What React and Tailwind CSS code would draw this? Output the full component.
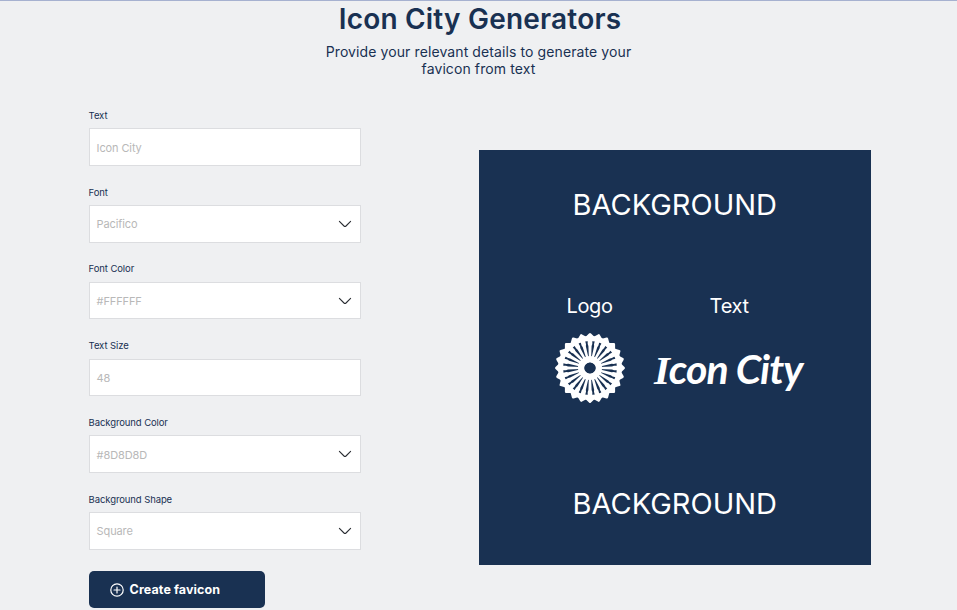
import React from "react";

const fields = [
  { label: "Text", value: "Icon City" },
  { label: "Font", value: "Pacifico", select: true },
  { label: "Font Color", value: "#FFFFFF", select: true },
  { label: "Text Size", value: "48" },
  { label: "Background Color", value: "#8D8D8D", select: true },
  { label: "Background Shape", value: "Square", select: true },
];

const spokes = Array.from({ length: 24 }, (_, i) => i * 15);

function Chevron() {
  return (
    <svg width="14" height="8" viewBox="0 0 14 8" fill="none" stroke="#292d32" strokeWidth="1.1" strokeLinecap="round" strokeLinejoin="round">
      <path d="M1.4 1.4 L6 6 Q7 6.8 8 6 L12.6 1.4" />
    </svg>
  );
}

function Field({ label, value, select }) {
  return (
    <div className="flex h-[76.75px] flex-col">
      <label className="h-[18.5px] text-[9.5px] leading-[12px] tracking-[-0.1px] text-[#193152]">{label}</label>
      <div className="flex h-[37.5px] w-[272px] items-center justify-between border border-[#dcdde0] bg-white pr-[8px] pl-[7px]">
        <span className="pt-px text-[11px] leading-[14px] tracking-[-0.12px] text-[#b8b8b8]">{value}</span>
        {select && <Chevron />}
      </div>
    </div>
  );
}

function Rosette() {
  return (
    <svg width="72" height="72" viewBox="-36 -36 72 72" fill="#fff">
      <circle r="29.4" fill="none" stroke="#fff" strokeWidth="5" />
      <circle r="8.7" fill="none" stroke="#fff" strokeWidth="6.6" />
      {spokes.map((a) => (
        <path key={a} transform={`rotate(${a})`} d="M-1.1 -9 L-1.6 -22 L-2.3 -24 L-2.3 -27 L-4.1 -29 L-4.1 -31.4 L-1 -34.5 Q0 -35.6 1 -34.5 L4.1 -31.4 L4.1 -29 L2.3 -27 L2.3 -24 L1.6 -22 L1.1 -9 Z" />
      ))}
      <ellipse rx="5.7" ry="5.2" fill="#193152" />
    </svg>
  );
}

export default function App() {
  return (
    <main className="h-[610px] w-[957px] overflow-hidden border-t border-[#a6b1d0] bg-[#eff0f2] font-['Inter',sans-serif] text-[#193152]">
      <header className="flex h-[108px] flex-col items-center pl-[3px] text-center">
        <h1 className="h-[42px] pt-[1px] text-[28px] leading-[35px] font-semibold tracking-[0.2px] whitespace-nowrap">Icon City Generators</h1>
        <p className="mr-[3px] text-[14px] leading-[17px] tracking-[0.1px] whitespace-nowrap">
          Provide your relevant details to generate your
          <br />
          favicon from text
        </p>
      </header>
      <div className="flex pl-[88.6px]">
        <form className="flex w-[390px] flex-col pt-[0.9px]">
          {fields.map((f) => (
            <Field key={f.label} {...f} />
          ))}
          <button type="button" className="mt-[0.5px] flex h-[37.5px] w-[176.4px] items-center gap-[6px] rounded-[5px] bg-[#193152] pl-[21px] text-[12.5px] font-bold tracking-[0.1px] text-white">
            <svg width="14" height="14" viewBox="0 0 14 14" fill="none" stroke="#fff" strokeWidth="1.2" strokeLinecap="round">
              <circle cx="7" cy="7" r="6.2" />
              <path d="M4 7h6M7 4v6" />
            </svg>
            <span className="pt-px whitespace-nowrap">Create favicon</span>
          </button>
        </form>
        <section className="mt-[41px] flex h-[415px] w-[392.4px] flex-col items-center bg-[#193152] text-white">
          <h2 className="mt-[36px] text-[29px] leading-[37px] whitespace-nowrap">BACKGROUND</h2>
          <div className="mt-[70px] grid w-full grid-cols-[222px_1fr] text-[20px] leading-[26px] tracking-[-0.3px]">
            <span className="text-center">Logo</span>
            <span className="pl-[9px]">Text</span>
          </div>
          <div className="mt-[13px] flex h-[72px] w-full items-center pl-[75.3px]">
            <Rosette />
            <div className="ml-[28px] pt-[2px] font-['Lato',sans-serif] text-[41px] leading-[50px] font-bold tracking-[-1px] whitespace-nowrap italic">
              <span className="font-['Liberation_Serif',serif]">I</span>con City
            </div>
          </div>
          <h2 className="mt-[81px] text-[29px] leading-[37px] whitespace-nowrap">BACKGROUND</h2>
        </section>
      </div>
    </main>
  );
}
